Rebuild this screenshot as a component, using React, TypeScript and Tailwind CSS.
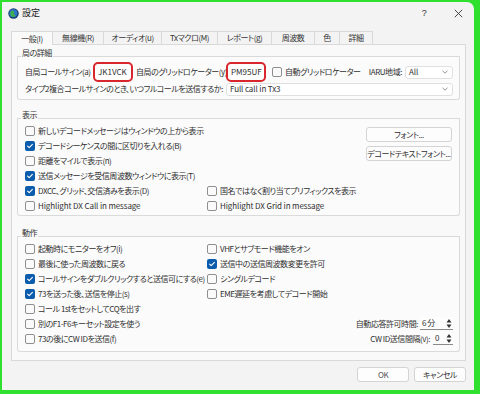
import React from "react";

function Box({ checked }: { checked?: boolean }) {
  if (checked)
    return (
      <span className="flex h-[10px] w-[10px] shrink-0 items-center justify-center rounded-[2px] bg-[#0b5cad]">
        <svg width="8" height="8" viewBox="0 0 8 8">
          <path d="M1.6 4.1 3.2 5.7 6.4 2.4" fill="none" stroke="#fff" strokeWidth="1.1" strokeLinecap="round" strokeLinejoin="round" />
        </svg>
      </span>
    );
  return <span className="h-[10px] w-[10px] shrink-0 rounded-[2px] border border-[#8f8f8f] bg-[#fafafa]" />;
}

function Check({ label, checked, className = "", latin }: { label: string; checked?: boolean; className?: string; latin?: boolean }) {
  return (
    <div className={"flex h-[15px] items-center gap-[3px] whitespace-nowrap " + className}>
      <Box checked={checked} />
      <span className={latin ? "tracking-[-0.1px]" : ""}>{label}</span>
    </div>
  );
}

function Group({ title, children, className = "" }: { title: string; children: React.ReactNode; className?: string }) {
  return (
    <div className={"mx-[5px] flex flex-col " + className}>
      <div className="flex h-[8px]">
        <div className="w-[4px] border-b border-[#dadada]" />
        <span className="px-[1px] leading-[8px] text-[#333]">{title}</span>
        <div className="flex-1 border-b border-[#dadada]" />
      </div>
      <div className="rounded-b-[3px] border-x border-b border-[#dadada] bg-[#fbfbfb]">{children}</div>
    </div>
  );
}

function Select({ value, className = "" }: { value: string; className?: string }) {
  return (
    <div className={"flex h-[13px] items-center justify-between rounded-[3px] border border-[#e0e0e0] bg-white pl-[3px] pr-[4px] " + className}>
      <span className="tracking-[-0.1px]">{value}</span>
      <svg width="6" height="4" viewBox="0 0 6 4">
        <path d="M0.5 0.8 3 3.2 5.5 0.8" fill="none" stroke="#777" strokeWidth="0.8" />
      </svg>
    </div>
  );
}

function RedInput({ value }: { value: string }) {
  return (
    <div className="flex h-[20px] w-[40px] shrink-0 items-center rounded-[5px] border-2 border-[#d9262c] bg-white pl-[3px]">
      <span className="tracking-[0px]">{value}</span>
    </div>
  );
}

function Spin({ value, className = "" }: { value: string; className?: string }) {
  return (
    <div className={"flex h-[13px] items-center border-b border-[#8a8a8a] bg-[#fdfdfd] " + className}>
      <span className="flex-1 pl-[2px]">{value}</span>
      <svg width="6" height="11" viewBox="0 0 6 11" className="mr-[1px]">
        <path d="M0.5 4.5 3 1 5.5 4.5Z" fill="#333" />
        <path d="M0.5 6.5 3 10 5.5 6.5Z" fill="#333" />
      </svg>
    </div>
  );
}

function Btn({ label, className = "" }: { label: string; className?: string }) {
  return (
    <div className={"flex h-[15px] items-center justify-center rounded-[3px] border border-[#d4d4d4] bg-[#fdfdfd] whitespace-nowrap " + className}>
      {label}
    </div>
  );
}

const tabs: [string, number][] = [
  ["一般(I)", 42],
  ["無線機(R)", 51],
  ["オーディオ(u)", 58],
  ["Txマクロ(M)", 56],
  ["レポート(g)", 54],
  ["周波数", 43],
  ["色", 25],
  ["詳細", 33],
];

export default function App() {
  return (
    <div className="h-[394px] w-[480px] overflow-hidden bg-[#2fe02f] pl-[2px] pt-[2px] font-['Noto_Sans_CJK_JP',sans-serif] text-[8px] leading-[10px] tracking-[-0.45px] text-[#303030] [font-feature-settings:'palt']">
      <div className="flex h-[388px] w-[472px] flex-col rounded-tr-[7px] bg-[#f3f3f3]">
        {/* title bar */}
        <div className="flex h-[22px] items-center pl-[6px]">
          <svg width="11" height="11" viewBox="0 0 11 11">
            <circle cx="5.5" cy="5.5" r="5.2" fill="#163f73" />
            <circle cx="5.3" cy="5.3" r="4" fill="#2f79c4" />
            <path d="M3 3.2c1.2-.8 2.6-.4 3 .6.4 1-.6 1.5-.2 2.5.3.8 1.4.8 1.8 1.5-.9 1.1-2.6 1.5-3.8.8C2.5 7.8 1.8 5.5 3 3.2Z" fill="#3fb04a" />
          </svg>
          <span className="ml-[3px] text-[9px] tracking-normal text-[#222]">設定</span>
          <div className="flex-1" />
          <span className="flex w-[36px] justify-center font-['Liberation_Sans',sans-serif] text-[9px] text-[#333]">?</span>
          <span className="flex w-[32px] justify-center">
            <svg width="9" height="9" viewBox="0 0 9 9">
              <path d="M0.8 0.8 8.2 8.2M8.2 0.8 0.8 8.2" stroke="#333" strokeWidth="0.9" />
            </svg>
          </span>
        </div>

        {/* tabs */}
        <div className="ml-[9px] mt-[7px] flex h-[13px]">
          {tabs.map(([t, w], i) => (
            <div
              key={t}
              style={{ width: w }}
              className={
                "flex items-center justify-center whitespace-nowrap border-r border-t border-[#d9d9d9] text-[#333] " +
                (i === 0 ? "relative z-10 -mb-[1px] h-[14px] border-l bg-[#f9f9f9]" : "")
              }
            >
              {t}
            </div>
          ))}
        </div>

        {/* tab page */}
        <div className="ml-[9px] flex h-[317px] w-[455px] flex-col border border-[#d9d9d9] bg-[#f9f9f9]">
          <Group title="局の詳細" className="mt-[4px]">
            <div className="flex flex-col pl-[7px] pr-[6px] pt-[6px] pb-[2px]">
              <div className="flex h-[18px] items-center whitespace-nowrap">
                <span className="w-[68px]">自局コールサイン(a)</span>
                <RedInput value="JK1VCK" />
                <span className="ml-[3px] w-[90px]">自局のグリッドロケーター(y)</span>
                <RedInput value="PM95UF" />
                <div className="ml-[6px]">
                  <Check label="自動グリッドロケーター" />
                </div>
                <div className="flex-1" />
                <span className="mr-[3px]">IARU地域:</span>
                <Select value="All" className="w-[48px]" />
              </div>
              <div className="flex h-[16px] items-center whitespace-nowrap">
                <span className="w-[201px]">タイプ2複合コールサインのとき、いつフルコールを送信するか:</span>
                <Select value="Full call in Tx3" className="flex-1" />
              </div>
            </div>
          </Group>

          <Group title="表示" className="mt-[11px]">
            <div className="flex pl-[7px] pr-[7px] pt-[4px] pb-[2px]">
              <div className="flex flex-1 flex-col">
                <Check label="新しいデコードメッセージはウィンドウの上から表示" />
                <Check label="デコードシーケンスの間に区切りを入れる(B)" checked />
                <Check label="距離をマイルで表示(n)" />
                <Check label="送信メッセージを受信周波数ウィンドウに表示(T)" checked />
                <div className="flex">
                  <Check label="DXCC、グリッド、交信済みを表示(D)" checked className="w-[182px]" />
                  <Check label="国名ではなく割り当てプリフィックスを表示" />
                </div>
                <div className="flex">
                  <Check label="Highlight DX Call in message" latin className="w-[182px]" />
                  <Check label="Highlight DX Grid in message" latin />
                </div>
              </div>
              <div className="flex w-[86px] flex-col gap-[4px] pt-[4px]">
                <Btn label="フォント..." />
                <Btn label="デコードテキストフォント..." />
              </div>
            </div>
          </Group>

          <Group title="動作" className="mt-[13px]">
            <div className="flex flex-col pl-[7px] pr-[6px] pt-[4px] pb-[5px]">
              <div className="flex">
                <Check label="起動時にモニターをオフ(i)" className="w-[182px]" />
                <Check label="VHFとサブモード機能をオン" />
              </div>
              <div className="flex">
                <Check label="最後に使った周波数に戻る" className="w-[182px]" />
                <Check label="送信中の送信周波数変更を許可" checked />
              </div>
              <div className="flex">
                <Check label="コールサインをダブルクリックすると送信可にする(e)" checked className="w-[182px]" />
                <Check label="シングルデコード" />
              </div>
              <div className="flex">
                <Check label="73を送った後、送信を停止(s)" checked className="w-[182px]" />
                <Check label="EME遅延を考慮してデコード開始" />
              </div>
              <div className="flex">
                <Check label="コール 1stをセットしてCQを出す" className="w-[182px]" />
              </div>
              <div className="flex h-[15px] items-center">
                <Check label="別のF1-F6キーセット設定を使う" className="w-[182px]" />
                <div className="flex flex-1 items-center justify-end whitespace-nowrap">
                  <span className="mr-[2px]">自動応答許可時間:</span>
                  <Spin value="6 分" className="w-[33px]" />
                </div>
              </div>
              <div className="flex h-[15px] items-center">
                <Check label="73の後にCW IDを送信(f)" className="w-[182px]" />
                <div className="flex flex-1 items-center justify-end whitespace-nowrap">
                  <span className="mr-[3px]">CW ID送信間隔(v):</span>
                  <Spin value="0" className="w-[20px]" />
                </div>
              </div>
            </div>
          </Group>
        </div>

        {/* buttons */}
        <div className="mt-[6px] flex justify-end gap-[5px] pr-[8px]">
          <Btn label="OK" className="w-[52px] border-[#5b93c6] text-[#555]" />
          <Btn label="キャンセル" className="w-[52px]" />
        </div>
      </div>
    </div>
  );
}
